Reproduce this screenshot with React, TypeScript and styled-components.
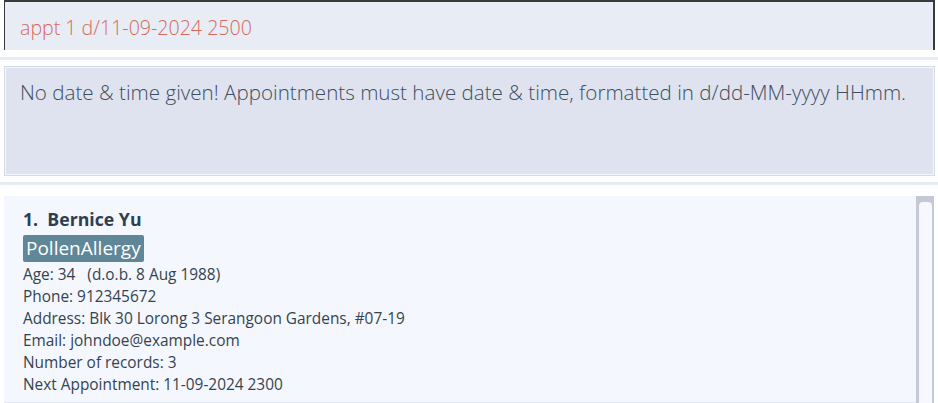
import React from "react";
import styled, { createGlobalStyle } from "styled-components";

const Global = createGlobalStyle`
  html, body { margin: 0; padding: 0; background: #ffffff; }
  body { font-family: "Open Sans", "Noto Sans", sans-serif; overflow: hidden; }
  * { box-sizing: border-box; }
`;

const Page = styled.div`
  width: 938px;
  height: 403px;
  display: flex;
  flex-direction: column;
  background: #ffffff;
`;

const CommandBox = styled.div`
  margin: 0 3px 0 4px;
  height: 50px;
  background: #e8ecf4;
  border-top: 2px solid #3a3a3a;
  border-left: 1px solid #3a3a3a;
  border-right: 2px solid #3a3a3a;
  display: flex;
  align-items: center;
  padding: 2px 0 0 15px;
`;

const CommandText = styled.span`
  font-size: 19.6px;
  font-weight: 300;
  color: #d46a5c;
`;

const Separator = styled.div<{ $top: number }>`
  height: 3px;
  background: #e7ebf4;
  margin-top: ${(p) => p.$top}px;
`;

const ResultBox = styled.div`
  margin: 6px 3px 0 4px;
  height: 110px;
  background: #dfe3ef;
  border: 1px solid #d4dae8;
  box-shadow: inset 0 0 0 1px #f4f6fb;
  padding: 11px 15px;
`;

const ResultText = styled.div`
  font-size: 20.6px;
  font-weight: 300;
  color: #3e4e5e;
`;

const ListPane = styled.div`
  flex: 1;
  display: flex;
  padding: 11px 4px 0 4px;
  min-height: 0;
`;

const Card = styled.div`
  flex: 1;
  background: #f4f7fe;
  border-bottom: 1px solid #e3e8f2;
  padding: 11px 19px 0 19px;
  overflow: hidden;
`;

const Name = styled.div`
  font-size: 17.7px;
  font-weight: 700;
  color: #2f3f50;
  line-height: 24px;
`;

const TagRow = styled.div`
  display: flex;
  gap: 4px;
  margin-top: 4px;
`;

const Tag = styled.span`
  background: #5f8797;
  color: #ffffff;
  font-size: 19px;
  line-height: 27px;
  padding: 0 3px;
  border-radius: 2px;
`;

const Details = styled.div`
  margin-top: 2px;
`;

const Field = styled.div`
  font-size: 15.4px;
  color: #34444f;
  line-height: 22px;
`;

const Scrollbar = styled.div`
  width: 18px;
  background: #c5c9d5;
  padding: 6px 2px 0 3px;
  display: flex;
`;

const Thumb = styled.div`
  flex: 1;
  background: #f6f8fd;
  border-radius: 4px 4px 0 0;
`;

export default function App() {
  return (
    <Page>
      <Global />
      <CommandBox>
        <CommandText>appt 1 d/11-09-2024 2500</CommandText>
      </CommandBox>
      <Separator $top={7} />
      <ResultBox>
        <ResultText>
          No date &amp; time given! Appointments must have date &amp; time, formatted in d/dd-MM-yyyy HHmm.
        </ResultText>
      </ResultBox>
      <Separator $top={6} />
      <ListPane>
        <Card>
          <Name>1.&nbsp;&nbsp;Bernice Yu</Name>
          <TagRow>
            <Tag>PollenAllergy</Tag>
          </TagRow>
          <Details>
            <Field>Age: 34&nbsp;&nbsp;&nbsp;(d.o.b. 8 Aug 1988)</Field>
            <Field>Phone: 912345672</Field>
            <Field>Address: Blk 30 Lorong 3 Serangoon Gardens, #07-19</Field>
            <Field>Email: johndoe@example.com</Field>
            <Field>Number of records: 3</Field>
            <Field>Next Appointment: 11-09-2024 2300</Field>
          </Details>
        </Card>
        <Scrollbar>
          <Thumb />
        </Scrollbar>
      </ListPane>
    </Page>
  );
}
